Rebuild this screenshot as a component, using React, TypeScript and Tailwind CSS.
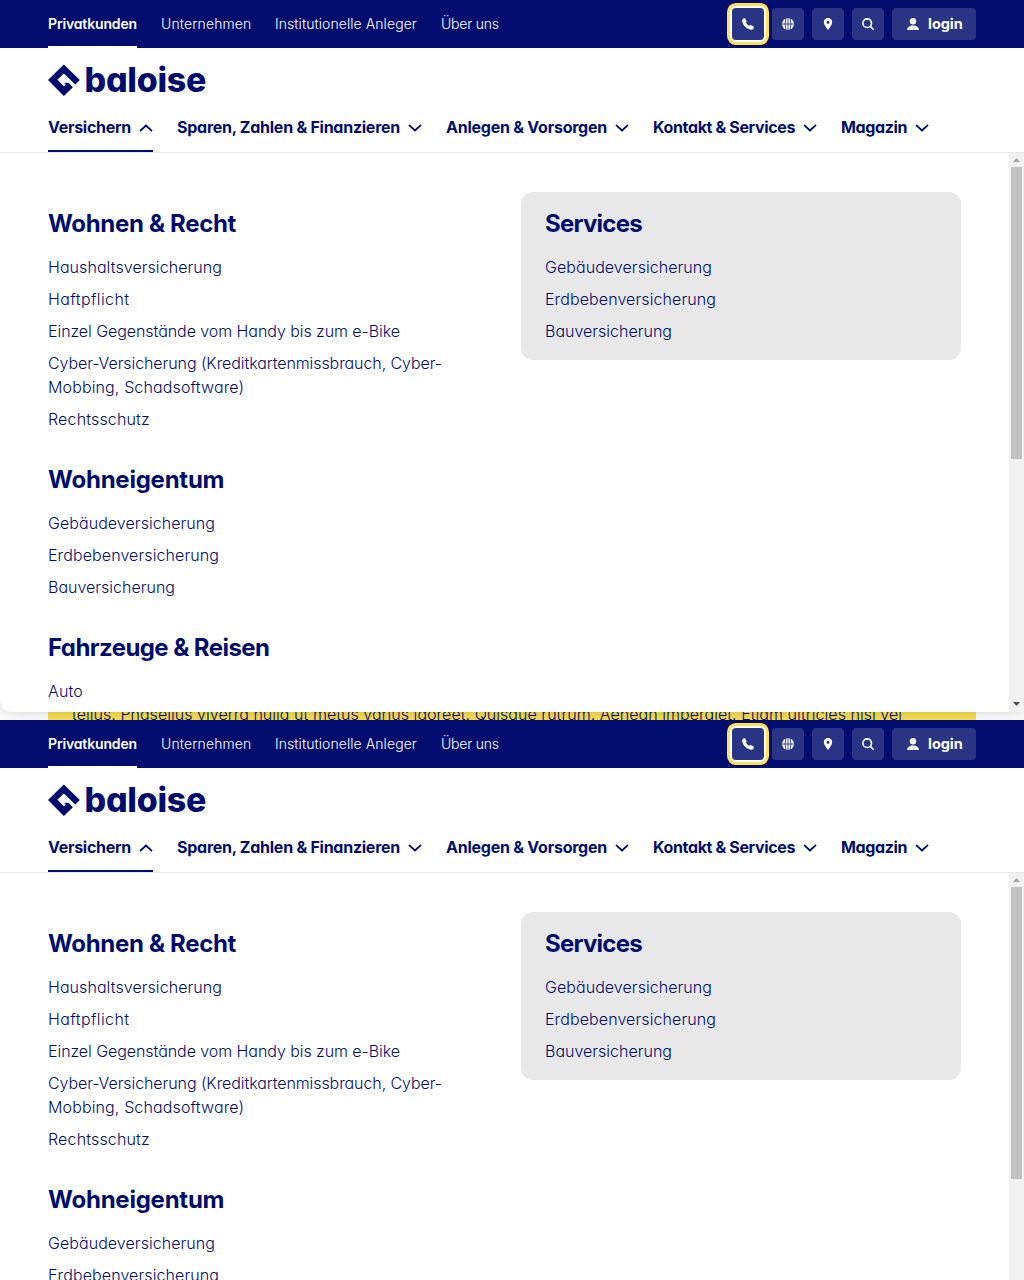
type Label = { text: string; tracking: string };

const META: Label[] = [
  { text: "Unternehmen", tracking: "w-[90px] tracking-[0.13px]" },
  { text: "Institutionelle Anleger", tracking: "w-[142px] tracking-[0.07px]" },
  { text: "Über uns", tracking: "w-[58px] tracking-[-0.22px]" },
];

const NAV: Label[] = [
  { text: "Versichern", tracking: "w-[83px] tracking-[-0.281px]" },
  { text: "Sparen, Zahlen & Finanzieren", tracking: "w-[223px] tracking-[-0.254px]" },
  { text: "Anlegen & Vorsorgen", tracking: "w-[161px] tracking-[-0.237px]" },
  { text: "Kontakt & Services", tracking: "w-[142px] tracking-[-0.362px]" },
  { text: "Magazin", tracking: "w-[66px] tracking-[-0.379px]" },
];

const PROPERTY: Label[] = [
  { text: "Gebäudeversicherung", tracking: "tracking-[0.057px]" },
  { text: "Erdbebenversicherung", tracking: "tracking-[0.096px]" },
  { text: "Bauversicherung", tracking: "tracking-[0.005px]" },
];

const GROUPS: { title: Label; items: Label[][] }[] = [
  {
    title: { text: "Wohnen & Recht", tracking: "tracking-[-0.333px]" },
    items: [
      [{ text: "Haushaltsversicherung", tracking: "tracking-[0.068px]" }],
      [{ text: "Haftpflicht", tracking: "tracking-[0.38px]" }],
      [{ text: "Einzel Gegenstände vom Handy bis zum e-Bike", tracking: "tracking-[-0.063px]" }],
      [
        { text: "Cyber-Versicherung (Kreditkartenmissbrauch, Cyber-", tracking: "tracking-[-0.08px]" },
        { text: "Mobbing, Schadsoftware)", tracking: "tracking-[0.13px]" },
      ],
      [{ text: "Rechtsschutz", tracking: "tracking-[0.16px]" }],
    ],
  },
  { title: { text: "Wohneigentum", tracking: "tracking-[-0.24px]" }, items: PROPERTY.map((p) => [p]) },
  {
    title: { text: "Fahrzeuge & Reisen", tracking: "tracking-[-0.57px]" },
    items: [[{ text: "Auto", tracking: "tracking-[0.168px]" }]],
  },
];

function Chevron({ up }: { up?: boolean }) {
  return (
    <svg width="14" height="8" viewBox="0 0 14 8" fill="none" stroke="currentColor" strokeWidth="1.8" strokeLinecap="round" strokeLinejoin="round" className={up ? "mt-px rotate-180" : "mt-px"}>
      <path d="M1.5 1.4 7 6.5l5.500-5.100" />
    </svg>
  );
}

function PhoneIcon() {
  return (
    <svg width="12" height="12" viewBox="0 0 12 12" fill="currentColor">
      <path d="M.4 1.800C.7.800 1.500.1 2.400.2c.6.1 1 .6 1.300 1.200l.7 1.400c.2.500.1.900-.1 1.300l-.3.500c.7 1.400 1.800 2.400 3.200 3.100l.6-.4c.400-.3.900-.3 1.300-.1l1.700.9c.800.400 1.200 1 .9 1.800-.4 1-1.300 1.900-2.600 1.800C4.900 11.400.4 7 .2 3.100c0-.5 0-.9.200-1.300Z" />
    </svg>
  );
}

function GlobeIcon() {
  return (
    <svg width="12" height="12" viewBox="0 0 12 12">
      <circle cx="6" cy="6" r="6" fill="white" />
      <path d="M6 0v12M0 6h12M3.900 0Q2.200 6 3.900 12M8.100 0Q9.800 6 8.100 12" fill="none" stroke="#293485" strokeWidth=".9" />
    </svg>
  );
}

function PinIcon() {
  return (
    <svg width="12" height="12" viewBox="0 0 12 12" fill="currentColor">
      <path fillRule="evenodd" d="M6 0a4.200 4.200 0 0 0-4.200 4.200C1.800 7.200 4.600 9.400 6 12c1.400-2.600 4.200-4.800 4.200-7.800A4.200 4.200 0 0 0 6 0Zm0 2.700a1.500 1.500 0 1 1 0 3 1.500 1.500 0 0 1 0-3Z" />
    </svg>
  );
}

function SearchIcon() {
  return (
    <svg width="12" height="12" viewBox="0 0 12 12" fill="none" stroke="currentColor" strokeWidth="1.600" strokeLinecap="round">
      <circle cx="5.200" cy="5.200" r="4.300" />
      <path d="m8.400 8.400 2.800 2.800" />
    </svg>
  );
}

function UserIcon() {
  return (
    <svg width="14" height="14" viewBox="0 0 14 14" fill="currentColor">
      <circle cx="7" cy="4.200" r="3.200" />
      <path d="M1 13C1.200 10 3.600 8.400 7 8.400s5.800 1.600 6 4.600Z" />
    </svg>
  );
}

function IconButton({ children, focused }: { children: React.ReactNode; focused?: boolean }) {
  return (
    <button
      className={
        "flex size-8 items-center justify-center rounded text-white " +
        (focused ? "bg-[#293485] shadow-[0_0_0_2px_#fff,0_0_0_5px_#ffe05a]" : "bg-[#293485]")
      }
    >
      {children}
    </button>
  );
}

function MetaBar() {
  return (
    <div className="flex h-12 items-center justify-between bg-[#000d6e] px-12 text-sm text-white">
      <div className="flex h-full gap-6 whitespace-nowrap">
        <a className="flex h-full w-[89px] items-center border-b-2 border-white pt-0.5 font-semibold tracking-[-0.146px]">Privatkunden</a>
        {META.map((m) => (
          <a key={m.text} className={"flex h-full items-center font-light " + m.tracking}>{m.text}</a>
        ))}
      </div>
      <div className="flex gap-2">
        <IconButton focused><PhoneIcon /></IconButton>
        <IconButton><GlobeIcon /></IconButton>
        <IconButton><PinIcon /></IconButton>
        <IconButton><SearchIcon /></IconButton>
        <button className="flex h-8 w-[84px] items-center gap-2 rounded bg-[#293485] pl-3.5 text-[14.5px] font-bold tracking-[-0.05px] text-white">
          <UserIcon />
          login
        </button>
      </div>
    </div>
  );
}

function Logo() {
  return (
    <div className="flex h-8 items-center">
      <svg width="32" height="32" viewBox="0 0 32 32" fill="currentColor">
        <path d="M15.800.400 31.800 16l-4.500 4.400L15.900 9.400 9.500 15.800l6.300 6.400 1.900-1.800-1.500-1.600 4.300-.1 4.400 4.600-9 8.700L0 16Z" />
      </svg>
      <span className="ml-[4.500px] text-[34px] leading-8 font-extrabold tracking-[-0.28px]">baloise</span>
    </div>
  );
}

function MainNav() {
  return (
    <div className="flex h-[105px] flex-col justify-between border-b border-[#e8e8e8] px-12 pt-4">
      <Logo />
      <div className="flex h-12 gap-6 font-bold whitespace-nowrap">
        {NAV.map((n, i) => (
          <a key={n.text} className={"flex h-full items-center gap-2 border-b-2 " + (i === 0 ? "border-[#000d6e]" : "border-transparent")}>
            <span className={n.tracking}>{n.text}</span>
            <Chevron up={i === 0} />
          </a>
        ))}
      </div>
    </div>
  );
}

function Group({ title, items }: { title: Label; items: Label[][] }) {
  return (
    <section>
      <h2 className={"text-2xl leading-8 font-bold " + title.tracking}>{title.text}</h2>
      <ul className="mt-[15px] mb-px flex flex-col gap-2 leading-6 font-light whitespace-nowrap">
        {items.map((lines) => (
          <li key={lines[0].text}>
            {lines.map((l) => (
              <span key={l.text} className={"block " + l.tracking}>{l.text}</span>
            ))}
          </li>
        ))}
      </ul>
    </section>
  );
}

function Scrollbar() {
  return (
    <div className="flex w-[15px] shrink-0 flex-col items-center justify-between bg-[#f1f1f1]">
      <div className="flex flex-col items-center">
        <svg width="15" height="14" viewBox="0 0 15 14"><path d="M4 9 7.500 5 11 9Z" fill="#a3a3a3" /></svg>
        <div className="h-[292px] w-[11px] bg-[#c1c1c1]" />
      </div>
      <svg width="15" height="15" viewBox="0 0 15 15"><path d="M4 5 7.500 9 11 5Z" fill="#505050" /></svg>
    </div>
  );
}

function Screen({ className }: { className: string }) {
  return (
    <div className={"relative overflow-hidden bg-white " + className}>
      <MetaBar />
      <MainNav />
      <div className="relative z-10 flex h-[559px] overflow-hidden rounded-bl-xl bg-white shadow-[0_0_16px_rgba(0,0,0,0.2)] [clip-path:inset(0_0_-20px_0)]">
        <div className="grid flex-1 grid-cols-[440px_440px] items-start gap-x-[33px] pt-[39px] pl-12">
          <div className="flex flex-col gap-8 pt-4">
            {GROUPS.map((g) => <Group key={g.title.text} {...g} />)}
          </div>
          <div className="rounded-xl bg-[#e8e8e8] px-6 py-4">
            <Group title={{ text: "Services", tracking: "tracking-[-0.740px]" }} items={PROPERTY.map((p) => [p])} />
          </div>
        </div>
        <Scrollbar />
      </div>
      <p className="mx-12 -mt-3 h-9 bg-[#fbe052] px-6 pt-[2px] leading-6 font-light tracking-[0.039px] whitespace-nowrap">
        tellus. Phasellus viverra nulla ut metus varius laoreet. Quisque rutrum. Aenean imperdiet. Etiam ultricies nisi vel
      </p>
    </div>
  );
}

export default function App() {
  return (
    <main className="h-[1280px] overflow-hidden font-['Inter','Liberation_Sans',sans-serif] text-base text-[#000d6e] [font-feature-settings:'cv11']">
      <Screen className="h-[720px]" />
      <Screen className="h-[560px]" />
    </main>
  );
}
